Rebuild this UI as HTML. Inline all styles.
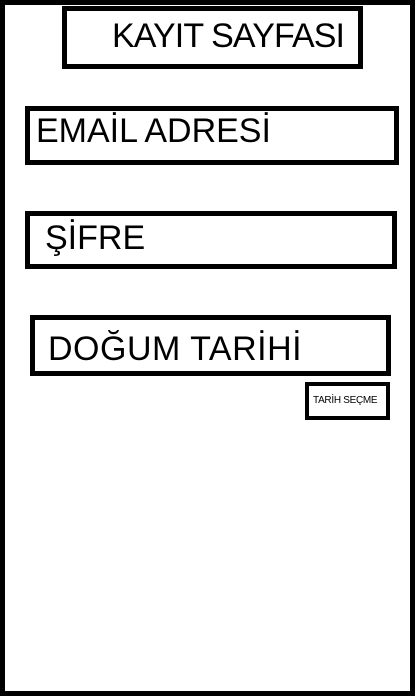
<!DOCTYPE html>
<html><head><meta charset="utf-8"><style>
body{margin:0;width:419px;height:696px;background:#fff;position:relative;overflow:hidden;font-family:"Liberation Sans",sans-serif;}
.b{position:absolute;border:5px solid #000;box-sizing:border-box;}
.t{position:absolute;white-space:nowrap;color:#000;line-height:1;}
</style></head><body>
<div class="b" style="left:0;top:0;width:415px;height:696px;"></div>
<div class="b" style="left:62px;top:6px;width:301px;height:63px;"></div>
<div class="t" style="left:112px;top:19px;font-size:34px;letter-spacing:-0.9px;">KAYIT SAYFASI</div>
<div class="b" style="left:25px;top:106px;width:374px;height:59px;"></div>
<div class="t" style="left:36px;top:114px;font-size:34px;">EMAİL ADRESİ</div>
<div class="b" style="left:25px;top:211px;width:372px;height:58px;"></div>
<div class="t" style="left:45px;top:221px;font-size:34px;">ŞİFRE</div>
<div class="b" style="left:30px;top:315px;width:361px;height:61px;"></div>
<div class="t" style="left:48px;top:332px;font-size:34px;letter-spacing:0.5px;">DOĞUM TARİHİ</div>
<div class="b" style="left:305px;top:382px;width:85px;height:38px;border-width:4px;"></div>
<div class="t" style="left:313px;top:396px;font-size:10px;letter-spacing:-0.3px;">TARİH SEÇME</div>
</body></html>
